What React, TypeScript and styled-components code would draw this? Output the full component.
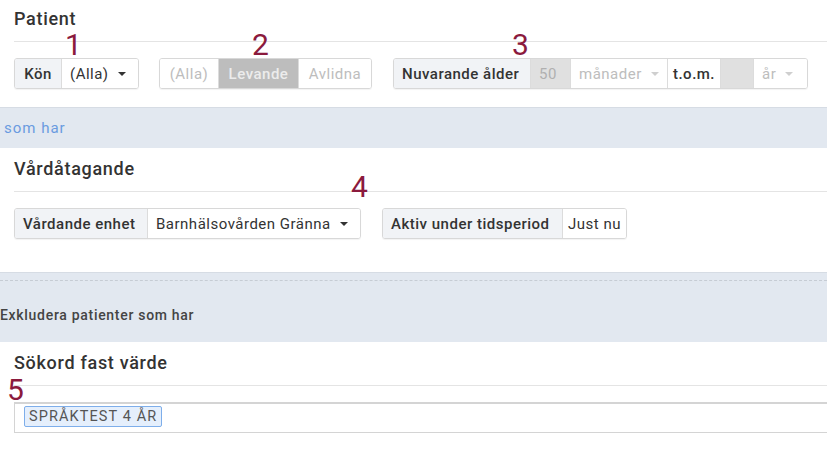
import styled, { createGlobalStyle, css } from "styled-components";

const GlobalStyle = createGlobalStyle`
  body {
    margin: 0;
    background: #fff;
    font-family: Roboto, "Liberation Sans", Arial, sans-serif;
    color: #333;
  }
`;

const Page = styled.div`
  width: 827px;
  overflow: hidden;
`;

const Section = styled.section<{ $top: number; $bottom: number }>`
  position: relative;
  padding: ${(p) => p.$top}px 0 ${(p) => p.$bottom}px 14px;
  background: #fff;
`;

const SectionHeader = styled.h2`
  margin: 0;
  padding-bottom: 12px;
  border-bottom: 1px solid #e4e4e4;
  font-size: 18px;
  line-height: 21px;
  font-weight: 500;
  letter-spacing: 0.7px;
  color: #333;
`;

const Row = styled.div`
  display: flex;
  gap: 20px;
  margin-top: 16px;
`;

const Group = styled.div<{ $ml?: number }>`
  display: inline-flex;
  height: 31px;
  box-sizing: border-box;
  border: 1px solid #d8d8d8;
  border-radius: 3px;
  overflow: hidden;
  box-shadow: 0 1px 1px rgba(0, 0, 0, 0.05);
  margin-left: ${(p) => p.$ml ?? 0}px;
`;

type CellKind = "label" | "value" | "strong" | "muted" | "active" | "filled";

const Cell = styled.div<{ $kind: CellKind; $w: number; $center?: boolean }>`
  display: flex;
  align-items: center;
  justify-content: ${(p) => (p.$center ? "center" : "flex-start")};
  width: ${(p) => p.$w}px;
  box-sizing: border-box;
  padding: 0 ${(p) => (p.$center ? 0 : 8)}px;
  font-size: 15px;
  letter-spacing: 0.5px;
  white-space: nowrap;
  border-left: 1px solid #dcdcdc;
  &:first-child {
    border-left: none;
  }
  ${(p) =>
    p.$kind === "label" &&
    css`
      background: #f1f3f6;
      font-weight: 500;
      color: #333;
    `}
  ${(p) =>
    p.$kind === "value" &&
    css`
      background: #fff;
      color: #333;
    `}
  ${(p) =>
    p.$kind === "strong" &&
    css`
      background: #fff;
      color: #333;
      font-weight: 500;
    `}
  ${(p) =>
    p.$kind === "muted" &&
    css`
      background: #fff;
      color: #bdbdbd;
    `}
  ${(p) =>
    p.$kind === "active" &&
    css`
      background: #bdbdbd;
      color: #ececec;
      font-weight: 500;
    `}
  ${(p) =>
    p.$kind === "filled" &&
    css`
      background: #e0e0e0;
      color: #b0b0b0;
    `}
`;

const Caret = styled.span<{ $light?: boolean }>`
  width: 0;
  height: 0;
  margin-left: 9px;
  border-left: 4px solid transparent;
  border-right: 4px solid transparent;
  border-top: 4px solid ${(p) => (p.$light ? "#cfcfcf" : "#333")};
`;

const Band = styled.div<{ $height: number; $dashed?: boolean }>`
  position: relative;
  box-sizing: border-box;
  height: ${(p) => p.$height}px;
  background: #e2e8f0;
  border-top: 1px solid #d6dce4;
  display: flex;
  align-items: center;
  padding-left: ${(p) => (p.$dashed ? 0 : 4)}px;
  ${(p) =>
    p.$dashed &&
    css`
      padding-top: 14px;
      &::before {
        content: "";
        position: absolute;
        left: 0;
        right: 0;
        top: 7px;
        border-top: 1px dashed #c6ccd4;
      }
    `}
`;

const BandLink = styled.span`
  font-size: 15px;
  letter-spacing: 1px;
  color: #6a9be0;
`;

const BandTitle = styled.span`
  font-size: 14px;
  font-weight: 500;
  letter-spacing: 0.7px;
  color: #444;
`;

const Marker = styled.span<{ $x: number; $y: number }>`
  position: absolute;
  left: ${(p) => p.$x}px;
  top: ${(p) => p.$y}px;
  font-size: 30px;
  line-height: 30px;
  color: #8b1a3d;
`;

const TagInput = styled.div`
  margin-top: 16px;
  height: 31px;
  box-sizing: border-box;
  border: 1px solid #d4d4d4;
  border-top-width: 2px;
  border-right: none;
  display: flex;
  align-items: flex-start;
  padding: 2px 0 0 9px;
`;

const Tag = styled.span`
  display: inline-flex;
  align-items: center;
  height: 21px;
  box-sizing: border-box;
  padding: 0 4px;
  background: #e5effc;
  border: 1px solid #7eaeea;
  border-radius: 2px;
  font-size: 14.5px;
  letter-spacing: 1.1px;
  color: #555;
`;

export default function App() {
  return (
    <Page>
      <GlobalStyle />
      <Section $top={8} $bottom={18}>
        <SectionHeader>Patient</SectionHeader>
        <Row>
          <Group>
            <Cell $kind="label" $w={46} $center>Kön</Cell>
            <Cell $kind="value" $w={77}>
              (Alla) <Caret />
            </Cell>
          </Group>
          <Group>
            <Cell $kind="muted" $w={58} $center>(Alla)</Cell>
            <Cell $kind="active" $w={80} $center>Levande</Cell>
            <Cell $kind="muted" $w={73} $center>Avlidna</Cell>
          </Group>
          <Group $ml={1}>
            <Cell $kind="label" $w={136}>Nuvarande ålder</Cell>
            <Cell $kind="filled" $w={40}>50</Cell>
            <Cell $kind="muted" $w={97}>
              månader <Caret $light />
            </Cell>
            <Cell $kind="strong" $w={53} $center>t.o.m.</Cell>
            <Cell $kind="filled" $w={33} />
            <Cell $kind="muted" $w={54}>
              år <Caret $light />
            </Cell>
          </Group>
        </Row>
        <Marker $x={65} $y={30}>1</Marker>
        <Marker $x={252} $y={30}>2</Marker>
        <Marker $x={512} $y={30}>3</Marker>
      </Section>

      <Band $height={41}>
        <BandLink>som har</BandLink>
      </Band>

      <Section $top={10} $bottom={33}>
        <SectionHeader>Vårdåtagande</SectionHeader>
        <Row>
          <Group>
            <Cell $kind="label" $w={132}>Vårdande enhet</Cell>
            <Cell $kind="value" $w={213}>
              Barnhälsovården Gränna <Caret />
            </Cell>
          </Group>
          <Group $ml={1}>
            <Cell $kind="label" $w={179}>Aktiv under tidsperiod</Cell>
            <Cell $kind="value" $w={64} $center>Just nu</Cell>
          </Group>
        </Row>
        <Marker $x={351} $y={24}>4</Marker>
      </Section>

      <Band $height={70} $dashed>
        <BandTitle>Exkludera patienter som har</BandTitle>
      </Band>

      <Section $top={10} $bottom={18}>
        <SectionHeader>Sökord fast värde</SectionHeader>
        <TagInput>
          <Tag>SPRÅKTEST 4 ÅR</Tag>
        </TagInput>
        <Marker $x={7} $y={33}>5</Marker>
      </Section>
    </Page>
  );
}
